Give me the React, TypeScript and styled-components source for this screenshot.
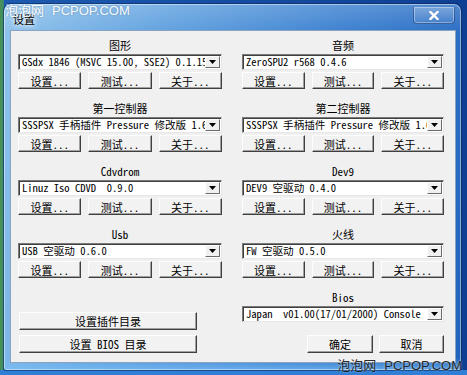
import React from "react";
import styled, { createGlobalStyle } from "styled-components";

const GlobalStyle = createGlobalStyle`
  html, body {
    margin: 0;
    padding: 0;
  }
  body {
    width: 467px;
    height: 375px;
    overflow: hidden;
    font-family: "Noto Sans Mono CJK SC", "Liberation Mono", "Noto Sans CJK SC", monospace;
  }
`;

const UI_FONT = `"Noto Sans Mono CJK SC", "Liberation Mono", "Noto Sans CJK SC", monospace`;

const Desktop = styled.div`
  position: relative;
  width: 467px;
  height: 375px;
  box-sizing: border-box;
  padding: 4px 6px 5px 4px;
  background:
    linear-gradient(0deg, #2f7fd6 0, #2f7fd6 5px, transparent 5px),
    linear-gradient(90deg, #4a9250 0, #3c8a76 4px, #1c5ab0 4px, #0f3f93 100%);
`;

const Window = styled.div`
  display: flex;
  flex-direction: column;
  height: 100%;
  border-radius: 7px 7px 2px 2px;
  background:
    linear-gradient(180deg, rgba(255, 255, 255, 0.18) 0, rgba(255, 255, 255, 0) 30px),
    linear-gradient(0deg, rgba(120, 190, 245, 0.7) 0, rgba(120, 190, 245, 0) 12px),
    linear-gradient(100deg, #8fc3ec 0%, #63a3e0 30%, #3d81d0 65%, #2164bd 100%);
  box-shadow: inset 0 0 0 1px rgba(255, 255, 255, 0.45), 0 0 0 1px rgba(10, 40, 90, 0.6);
`;

const TitleBar = styled.div`
  display: flex;
  align-items: flex-start;
  height: 27px;
  padding-left: 9px;
`;

const Title = styled.span`
  margin-top: 9px;
  font-size: 11px;
  line-height: 12px;
  color: #000;
  text-shadow: 0 0 4px #fff, 0 0 6px #fff;
`;

const CloseButton = styled.div`
  display: flex;
  align-items: center;
  justify-content: center;
  width: 42px;
  height: 17px;
  margin: 3px 6px 0 auto;
  box-sizing: border-box;
  border: 1px solid rgba(20, 50, 110, 0.55);
  border-top: none;
  border-radius: 0 0 4px 4px;
  background: linear-gradient(180deg, rgba(255, 255, 255, 0.25), rgba(255, 255, 255, 0.05));
  box-shadow: inset 0 0 0 1px rgba(255, 255, 255, 0.35);
`;

const Client = styled.div`
  flex: 1;
  margin: 0 6px 8px 7px;
  padding: 7px 11px 0 7px;
  display: grid;
  grid-template-columns: 204px 202px;
  grid-template-rows: repeat(4, 51px) 63px;
  column-gap: 20px;
  row-gap: 12px;
  background: #f0f0f0;
  box-shadow: 0 0 0 1px #8aa3c0;
  font-family: ${UI_FONT};
`;

const Group = styled.div`
  display: flex;
  flex-direction: column;
  gap: 2px;
`;

const Label = styled.div`
  height: 14px;
  font-size: 11px;
  line-height: 14px;
  text-align: center;
  color: #000;
`;

const Combo = styled.div`
  position: relative;
  height: 16px;
  box-sizing: border-box;
  background: #fff;
  border: 1px solid;
  border-color: #7a7a7a #e6e6e6 #e6e6e6 #7a7a7a;
  box-shadow: inset 1px 1px 0 #404040;
  overflow: hidden;
`;

const ComboText = styled.div`
  padding-left: 3px;
  font-size: 10.6px;
  line-height: 14px;
  white-space: pre;
  color: #000;
`;

const ArrowBox = styled.div`
  position: absolute;
  top: 1px;
  right: 1px;
  width: 15px;
  height: 12px;
  display: flex;
  align-items: center;
  justify-content: center;
  box-sizing: border-box;
  background: #f0f0f0;
  border: 1px solid;
  border-color: #fff #6a6a6a #6a6a6a #fff;
`;

const ButtonRow = styled.div`
  display: grid;
  grid-template-columns: repeat(3, 1fr);
  column-gap: 7px;
`;

const Button = styled.div<{ $w?: number; $h?: number }>`
  display: flex;
  align-items: center;
  justify-content: center;
  width: ${(p) => (p.$w ? `${p.$w}px` : "auto")};
  height: ${(p) => p.$h ?? 17}px;
  box-sizing: border-box;
  background: #f2f2f2;
  border: 1px solid;
  border-color: #fdfdfd #404040 #404040 #fdfdfd;
  box-shadow: inset -1px -1px 0 #a0a0a0;
  font-size: 11px;
  color: #000;
  white-space: pre;
`;

const DirButtons = styled.div`
  display: flex;
  flex-direction: column;
  justify-content: flex-end;
  gap: 5px;
  padding-left: 1px;
`;

const ActionRow = styled.div`
  display: flex;
  justify-content: flex-end;
  gap: 6px;
  margin-top: auto;
`;

const Watermark = styled.div<{ $dark?: boolean }>`
  position: absolute;
  display: flex;
  gap: 8px;
  font-family: "Liberation Sans", "Noto Sans CJK SC", sans-serif;
  font-size: 13px;
  line-height: 14px;
  color: ${(p) => (p.$dark ? "#1a1a1a" : "#fff")};
  text-shadow: ${(p) => (p.$dark ? "0 0 2px rgba(255,255,255,0.7)" : "0 0 2px rgba(0,0,0,0.25)")};
  opacity: 0.92;
`;

const Arrow = () => (
  <svg width="7" height="4" viewBox="0 0 7 4">
    <path d="M0 0h7L3.5 4z" fill="#000" />
  </svg>
);

const CloseGlyph = () => (
  <svg width="10" height="9" viewBox="0 0 10 9">
    <path d="M1.5 1l7 7M8.5 1l-7 7" stroke="#fff" strokeWidth="2.4" strokeLinecap="square" />
  </svg>
);

const ComboBox = ({ value }: { value: string }) => (
  <Combo>
    <ComboText>{value}</ComboText>
    <ArrowBox>
      <Arrow />
    </ArrowBox>
  </Combo>
);

interface IPluginProps {
  title: string;
  value: string;
}

const Plugin = ({ title, value }: IPluginProps) => (
  <Group>
    <Label>{title}</Label>
    <ComboBox value={value} />
    <ButtonRow>
      <Button>设置...</Button>
      <Button>测试...</Button>
      <Button>关于...</Button>
    </ButtonRow>
  </Group>
);

const plugins: IPluginProps[] = [
  { title: "图形", value: "GSdx 1846 (MSVC 15.00, SSE2) 0.1.15" },
  { title: "音频", value: "ZeroSPU2 r568 0.4.6" },
  { title: "第一控制器", value: "SSSPSX 手柄插件 Pressure 修改版 1.6" },
  { title: "第二控制器", value: "SSSPSX 手柄插件 Pressure 修改版 1.6" },
  { title: "Cdvdrom", value: "Linuz Iso CDVD  0.9.0" },
  { title: "Dev9", value: "DEV9 空驱动 0.4.0" },
  { title: "Usb", value: "USB 空驱动 0.6.0" },
  { title: "火线", value: "FW 空驱动 0.5.0" },
];

export default function App() {
  return (
    <Desktop>
      <GlobalStyle />
      <Window>
        <TitleBar>
          <Title>设置</Title>
          <CloseButton>
            <CloseGlyph />
          </CloseButton>
        </TitleBar>
        <Client>
          {plugins.map((p) => (
            <Plugin key={p.title} title={p.title} value={p.value} />
          ))}
          <DirButtons>
            <Button $w={178} $h={18}>设置插件目录</Button>
            <Button $w={178} $h={18}>设置 BIOS 目录</Button>
          </DirButtons>
          <Group>
            <Label>Bios</Label>
            <ComboBox value="Japan  v01.00(17/01/2000) Console" />
            <ActionRow>
              <Button $w={66} $h={18}>确定</Button>
              <Button $w={65} $h={18}>取消</Button>
            </ActionRow>
          </Group>
        </Client>
      </Window>
      <Watermark style={{ left: 5, top: 4 }}>
        <span>泡泡网</span>
        <span>PCPOP.COM</span>
      </Watermark>
      <Watermark $dark style={{ right: 5, bottom: 2 }}>
        <span>泡泡网</span>
        <span>PCPOP.COM</span>
      </Watermark>
    </Desktop>
  );
}
